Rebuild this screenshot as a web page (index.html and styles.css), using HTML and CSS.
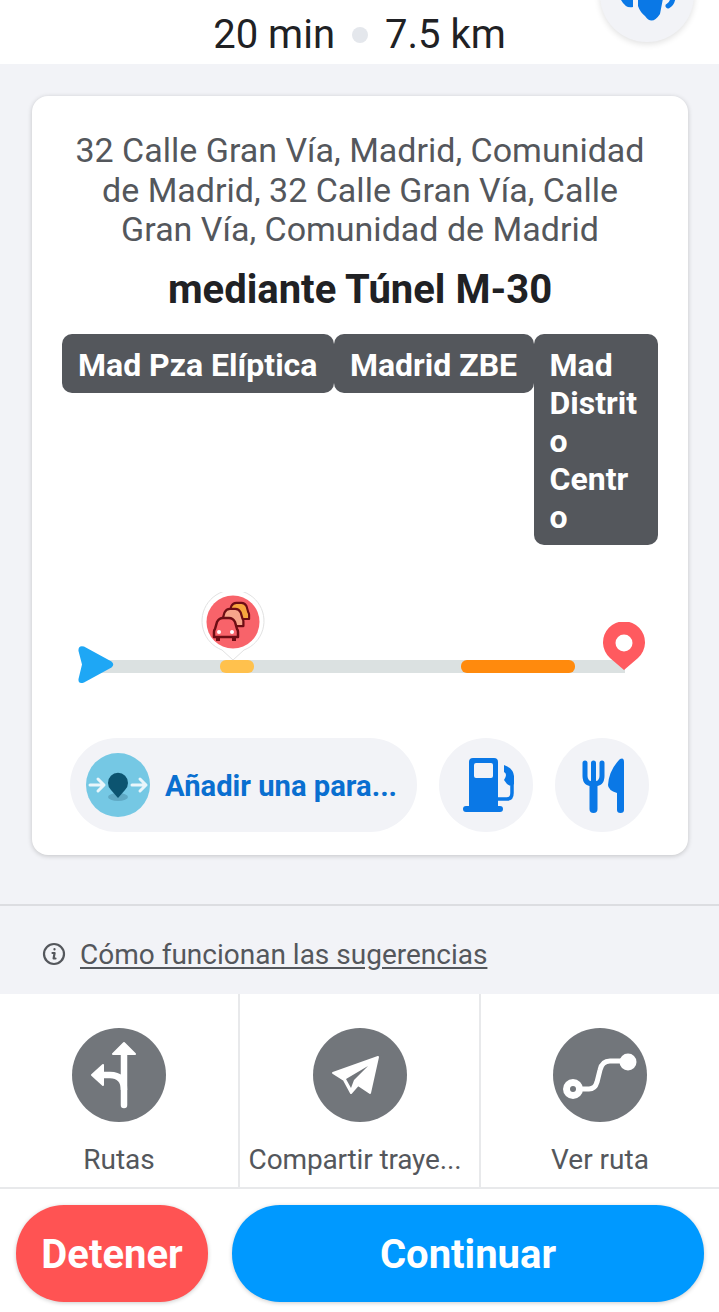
FILE: index.html
```html
<!DOCTYPE html>
<html lang="es">
<head>
    <meta charset="UTF-8">
    <meta name="viewport" content="width=device-width, initial-scale=1.0">
    <title>Ruta</title>
    <link rel="stylesheet" href="styles.css">
</head>
<body>
    <header class="top">
        <div class="summary">
            <span>20 min</span>
            <i class="dot"></i>
            <span>7.5 km</span>
        </div>
        <div class="sound">
            <svg viewBox="0 0 94 94" width="94" height="94">
                <path d="M38 40 H65 L60 66 Q52 78 45 68 Q40 64 38 58 Z" fill="#0a78e6"/>
                <path d="M21 40 H33 V59 Q26 61 21 52 Z" fill="#0a78e6"/>
                <path d="M68 58 Q72 56 73 50" fill="none" stroke="#0a78e6" stroke-width="5" stroke-linecap="round"/>
            </svg>
        </div>
    </header>

    <main class="content">
        <section class="card">
            <p class="address">32 Calle Gran Vía, Madrid, Comunidad de Madrid, 32 Calle Gran Vía, Calle Gran Vía, Comunidad de Madrid</p>
            <h2 class="via">mediante Túnel M-30</h2>
            <div class="tags">
                <span class="tag">Mad Pza Elíptica</span>
                <span class="tag">Madrid ZBE</span>
                <span class="tag tag-narrow">Mad Distrito Centro</span>
            </div>
            <div class="route">
                <div class="track">
                    <i class="seg seg-yellow"></i>
                    <i class="seg seg-orange"></i>
                </div>
                <svg class="start" viewBox="0 0 37 40" width="37" height="40">
                    <path d="M7 1.500 L34.500 16.500 Q38 19.500 34.500 22.500 L7 37.500 Q1 39.500 1.500 34 L5 19.500 L1.500 6 Q1 0 7 1.500 Z" fill="#1ea7f5"/>
                </svg>
                <svg class="end" viewBox="0 0 42 48" width="42" height="48">
                    <path d="M21 48 L7 36 A21 21 0 1 1 35 36 Z" fill="#ff5a5f"/>
                    <circle cx="21" cy="21" r="8.500" fill="#fff"/>
                </svg>
                <svg class="jam" viewBox="0 0 64 70" width="64" height="70">
                    <path d="M32 68 L21 58 A31 31 0 1 1 43 58 Z" fill="#fff" stroke="#e2e2e2" stroke-width="1"/>
                    <circle cx="32" cy="30" r="26.500" fill="#f8636a"/>
                    <g stroke="#6d0d14" stroke-width="2.500" stroke-linejoin="round">
                        <path transform="translate(26 10) scale(0.85)" d="M3 12 L5 5 Q7 1 11 1 H17 Q21 1 23 5 L25 12 Q26 13 26 15 V20 H2 V15 Q2 13 3 12 Z" fill="#f7a63e"/>
                        <path transform="translate(19 16) scale(0.9)" d="M3 12 L5 5 Q7 1 11 1 H17 Q21 1 23 5 L25 12 Q26 13 26 15 V20 H2 V15 Q2 13 3 12 Z" fill="#f6a58a"/>
                        <path transform="translate(11 25)" d="M3 12 L5 5 Q7 1 11 1 H17 Q21 1 23 5 L25 12 Q26 13 26 15 V20 H2 V15 Q2 13 3 12 Z" fill="#f8636a"/>
                    </g>
                    <path d="M15 45 H19 V49 H15 Z M31 45 H35 V49 H31 Z" fill="#6d0d14"/>
                    <circle cx="18" cy="40" r="2" fill="#fff"/>
                    <circle cx="31" cy="40" r="2" fill="#fff"/>
                </svg>
            </div>
            <div class="stops">
                <div class="add-stop">
                    <svg viewBox="0 0 64 64" width="64" height="64">
                        <circle cx="32" cy="32" r="32" fill="#75c8e4"/>
                        <ellipse cx="32" cy="44" rx="10" ry="4" fill="#5fa9c4"/>
                        <path d="M4 32 H17 M12 26 L18 32 L12 38 M46 32 H60 M54 26 L60 32 L54 38" fill="none" stroke="#e9f6fb" stroke-width="3" stroke-linecap="round" stroke-linejoin="round"/>
                        <path d="M32 45 L25 37 A10 10 0 1 1 39 37 Z" fill="#0c5470"/>
                    </svg>
                    <span>Añadir una para...</span>
                </div>
                <div class="stop-btn">
                    <svg viewBox="0 0 94 94" width="94" height="94">
                        <path d="M30 24 Q30 20 34 20 H55 Q59 20 59 24 V68 H61 Q64 68 64 71 Q64 74 61 74 H27 Q24 74 24 71 Q24 68 27 68 H30 Z M37 25 Q35 25 35 27 V38 Q35 40 37 40 H52 Q54 40 54 38 V27 Q54 25 52 25 Z" fill="#0a78e6" fill-rule="evenodd"/>
                        <path d="M59 61 H68 Q73 61 73 55 V44" fill="none" stroke="#0a78e6" stroke-width="3.500"/>
                        <path d="M65 27 Q74 30 75 38 V46 Q72 49 68 46 L65 42 Q69 36 65 34 Z" fill="#0a78e6"/>
                    </svg>
                </div>
                <div class="stop-btn">
                    <svg viewBox="0 0 94 94" width="94" height="94">
                        <path d="M30 25 V38 Q30 46 38.500 46 Q47 46 47 38 V25 M38.500 25 V46" fill="none" stroke="#0a78e6" stroke-width="5" stroke-linecap="round"/>
                        <path d="M38.500 46 V71" fill="none" stroke="#0a78e6" stroke-width="8" stroke-linecap="round"/>
                        <path d="M65 21 Q69 19 69 24 V72 Q69 75 65.500 75 Q62 75 62 72 V55 Q53 52 53 47 Q54 32 65 21 Z" fill="#0a78e6"/>
                    </svg>
                </div>
            </div>
        </section>

        <div class="info-row">
            <svg viewBox="0 0 24 24" width="24" height="24">
                <circle cx="12" cy="12" r="10" fill="none" stroke="#54575c" stroke-width="2.200"/>
                <path d="M12.500 7 V7.500 M10.500 11 H12.600 L11.600 16.500 H13.500" fill="none" stroke="#54575c" stroke-width="2.200" stroke-linecap="round" stroke-linejoin="round"/>
            </svg>
            <a class="info-link">Cómo funcionan las sugerencias</a>
        </div>
    </main>

    <nav class="actions">
        <div class="action">
            <svg class="action-icon" viewBox="0 0 94 94" width="94" height="94">
                <circle cx="47" cy="47" r="47" fill="#72767b"/>
                <path d="M52 77 V25" fill="none" stroke="#fff" stroke-width="6.500" stroke-linecap="round"/>
                <path d="M52 62 Q52 47 38 47 H28" fill="none" stroke="#fff" stroke-width="6.500"/>
                <path d="M52 15 L63 26 H41 Z M20 47 L31 37 V57 Z" fill="#fff" stroke="#fff" stroke-width="2" stroke-linejoin="round"/>
            </svg>
            <span class="action-label">Rutas</span>
        </div>
        <div class="action">
            <svg class="action-icon" viewBox="0 0 94 94" width="94" height="94">
                <circle cx="47" cy="47" r="47" fill="#72767b"/>
                <path d="M65 29 L20 45 L31 52 L38 65 L45 57 L57 65 Z" fill="#fff" stroke="#fff" stroke-width="2" stroke-linejoin="round"/>
                <path d="M55 38 L33 51 L38 60 L41 52 Z" fill="#72767b"/>
            </svg>
            <span class="action-label action-label-long">Compartir traye...</span>
        </div>
        <div class="action">
            <svg class="action-icon" viewBox="0 0 94 94" width="94" height="94">
                <circle cx="47" cy="47" r="47" fill="#72767b"/>
                <path d="M21 61 H36 Q42 61 44 54 L47 42 Q49 33 57 33 H75" fill="none" stroke="#fff" stroke-width="5" stroke-linecap="round"/>
                <circle cx="20" cy="61" r="10" fill="#fff"/>
                <circle cx="20" cy="61" r="3" fill="#72767b"/>
                <circle cx="75" cy="34" r="8.500" fill="#fff"/>
            </svg>
            <span class="action-label">Ver ruta</span>
        </div>
    </nav>

    <footer class="bottom">
        <button class="btn btn-stop">Detener</button>
        <button class="btn btn-go">Continuar</button>
    </footer>
</body>
</html>
```

FILE: styles.css
```css
* {
    box-sizing: border-box;
}
body {
    margin: 0;
    width: 719px;
    height: 1312px;
    overflow: hidden;
    font-family: 'Roboto', 'Liberation Sans', sans-serif;
    background: #fff;
    display: flex;
    flex-direction: column;
}
.top {
    position: relative;
    height: 64px;
    background: #fff;
    overflow: hidden;
}
.summary {
    display: flex;
    justify-content: center;
    align-items: center;
    gap: 17px;
    height: 64px;
    padding-top: 5px;
    font-size: 40px;
    color: #202124;
}
.dot {
    width: 16px;
    height: 16px;
    border-radius: 50%;
    background: #e4e7ec;
}
.sound {
    position: absolute;
    left: 600px;
    top: -52px;
    width: 94px;
    height: 94px;
    border-radius: 50%;
    background: #f2f3f7;
    box-shadow: 0 2px 6px rgba(0, 0, 0, 0.12);
}
.content {
    height: 930px;
    background: #f2f3f7;
    padding-top: 32px;
}
.card {
    width: 656px;
    height: 759px;
    margin-left: 32px;
    padding: 35px 30px 0;
    background: #fff;
    border-radius: 16px;
    box-shadow: 0 1px 5px rgba(0, 0, 0, 0.2);
}
.address {
    margin: 0;
    padding: 0 8px;
    text-align: center;
    font-size: 34px;
    line-height: 39.5px;
    color: #54575c;
}
.via {
    margin: 18px 0 0;
    text-align: center;
    font-size: 40px;
    line-height: 44px;
    font-weight: 700;
    color: #202124;
}
.tags {
    display: flex;
    align-items: flex-start;
    margin-top: 22px;
}
.tag {
    padding: 12px 16.5px 9px 16px;
    font-size: 32px;
    line-height: 38px;
    font-weight: 700;
    color: #fff;
    background: #54575c;
    border-radius: 10px;
    white-space: nowrap;
}
.tag-narrow {
    width: 124px;
    white-space: normal;
    word-break: break-word;
}
.route {
    position: relative;
    height: 193px;
}
.track {
    position: absolute;
    left: 38px;
    top: 115px;
    width: 525px;
    height: 13px;
    background: #dbe1e1;
}
.seg {
    position: absolute;
    top: 0;
    height: 13px;
    border-radius: 6px;
}
.seg-yellow {
    left: 120px;
    width: 34px;
    background: #ffc14d;
}
.seg-orange {
    left: 361px;
    width: 114px;
    background: #ff8a0d;
}
.start {
    position: absolute;
    left: 15px;
    top: 100px;
}
.end {
    position: absolute;
    left: 541px;
    top: 77px;
}
.jam {
    position: absolute;
    left: 139px;
    top: 47px;
}
.stops {
    display: flex;
    gap: 22px;
    margin-left: 8px;
}
.add-stop {
    display: flex;
    align-items: center;
    gap: 15px;
    width: 347px;
    height: 94px;
    padding-left: 16px;
    background: #f2f3f7;
    border-radius: 47px;
    font-size: 29.2px;
    font-weight: 700;
    color: #0a6fd0;
    white-space: nowrap;
}
.add-stop span {
    padding-top: 2px;
}
.stop-btn {
    display: flex;
    align-items: center;
    justify-content: center;
    width: 94px;
    height: 94px;
    background: #f2f3f7;
    border-radius: 50%;
}
.info-row {
    display: flex;
    align-items: center;
    gap: 14px;
    margin-top: 49px;
    height: 100px;
    padding: 0 0 2px 42px;
    border-top: 2px solid #dcdde1;
}
.info-link {
    font-size: 28px;
    color: #54575c;
    text-decoration: underline;
    text-underline-offset: 3px;
}
.actions {
    display: grid;
    grid-template-columns: 240px 241px 238px;
    height: 195px;
    background: #fff;
    border-bottom: 2px solid #e8e9eb;
}
.action {
    display: flex;
    flex-direction: column;
    align-items: center;
    padding-top: 34px;
    border-right: 2px solid #e8e9eb;
    overflow: hidden;
}
.action:last-child {
    border-right: none;
}
.action-label {
    margin-top: 22px;
    font-size: 28px;
    line-height: 32px;
    color: #54575c;
    white-space: nowrap;
}
.action-label-long {
    margin-right: 9px;
    letter-spacing: -0.15px;
}
.bottom {
    display: flex;
    gap: 24px;
    padding: 16px 15px 0 16px;
    background: #fff;
    flex: 1;
}
.btn {
    height: 97px;
    padding: 2px 0 0;
    border: none;
    border-radius: 48px;
    font-family: inherit;
    font-size: 40px;
    font-weight: 700;
    color: #fff;
    box-shadow: 0 1px 4px rgba(0, 0, 0, 0.2);
}
.btn-stop {
    width: 192px;
    background: #ff5353;
}
.btn-go {
    flex: 1;
    background: #0099ff;
}
```
